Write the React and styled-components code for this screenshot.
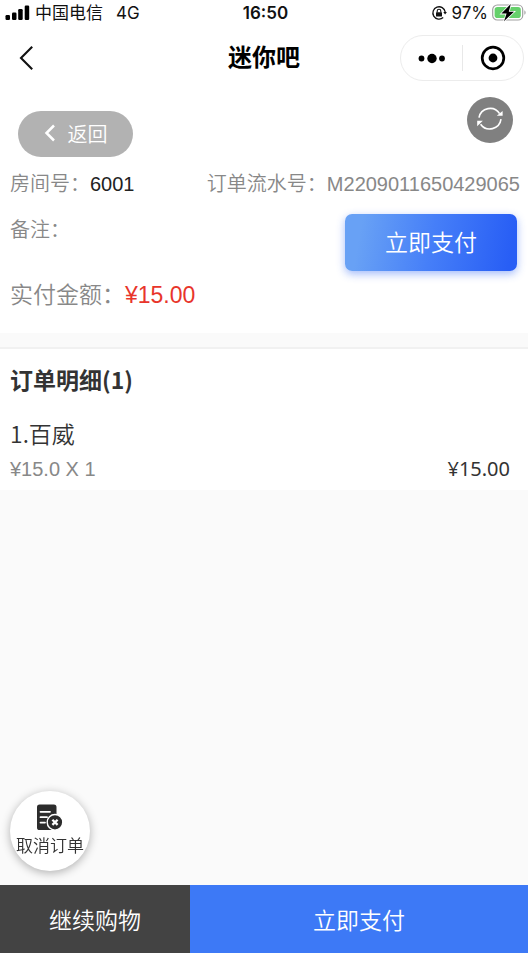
import styled, { createGlobalStyle } from 'styled-components';

const GlobalStyle = createGlobalStyle`
  * {
    box-sizing: border-box;
  }

  body {
    margin: 0;
    background: #fafafa;
    color: #333;
    font-family: 'Liberation Sans', 'Noto Sans CJK SC', sans-serif;
    font-size: 20px;
  }

  button {
    border: 0;
    padding: 0;
    font-family: inherit;
    cursor: pointer;
  }
`;

const Page = styled.div`
  display: flex;
  flex-direction: column;
  min-height: 100vh;
`;

const StatusBar = styled.div`
  display: grid;
  grid-template-columns: 1fr auto 1fr;
  align-items: center;
  height: 26px;
  padding: 0 2px 0 5px;
  background: #fff;
  color: #111;
  font-family: 'Inter', 'Noto Sans CJK SC', sans-serif;
  font-size: 17px;
  line-height: 26px;
`;

const StatusGroup = styled.div`
  display: flex;
  align-items: center;
  justify-content: ${props => (props.$end ? 'flex-end' : 'flex-start')};
  gap: ${props => (props.$end ? '4px' : '5px')};
`;

const Network = styled.span`
  margin-left: 8px;
`;

const Clock = styled.span`
  font-weight: 600;
`;

const NavBar = styled.header`
  display: grid;
  grid-template-columns: 1fr auto 1fr;
  align-items: center;
  height: 64px;
  padding: 0 4px;
  background: #fff;
  color: #000;
`;

const BackButton = styled.button`
  display: flex;
  justify-self: start;
  padding: 0 14px;
  background: none;
  color: #111;
`;

const NavTitle = styled.h1`
  margin: 0;
  font-size: 24px;
  font-weight: 700;
  line-height: 32px;
`;

const Capsule = styled.div`
  display: flex;
  align-items: center;
  justify-self: end;
  width: 124px;
  height: 46px;
  border: 1px solid #ececec;
  border-radius: 23px;
`;

const CapsuleButton = styled.button`
  display: flex;
  flex: 1;
  align-items: center;
  justify-content: center;
  height: 26px;
  background: none;

  & + & {
    border-left: 1px solid #e8e8e8;
  }
`;

const Toolbar = styled.div`
  display: flex;
  align-items: flex-end;
  justify-content: space-between;
  height: 78px;
  padding: 7px 15px 11px 18px;
  background: #fff;
`;

const ReturnButton = styled.button`
  display: flex;
  align-items: center;
  justify-content: center;
  gap: 12px;
  width: 115px;
  height: 46px;
  padding-bottom: 2px;
  border-radius: 23px;
  background: #b2b2b2;
  color: #fff;
  font-size: 20px;
  font-weight: 350;
`;

const RefreshButton = styled.button`
  display: flex;
  align-items: center;
  justify-content: center;
  align-self: flex-start;
  width: 46px;
  height: 46px;
  border-radius: 50%;
  background: #808080;
`;

const Summary = styled.section`
  padding: 0 10px 22px;
  background: #fff;
  color: #888;
  font-weight: 350;
  line-height: 32px;
`;

const SummaryRow = styled.div`
  display: flex;
  align-items: flex-start;
  justify-content: space-between;
  margin-right: ${props => props.$inset || '0'};
  margin-bottom: ${props => props.$gap || '0'};
`;

const Strong = styled.span`
  color: #222;
`;

const OrderNumber = styled.span`
  margin-right: -2px;
  white-space: nowrap;
`;

const PayButton = styled.button`
  width: 172px;
  height: 57px;
  padding-bottom: 4px;
  border-radius: 7px;
  background: linear-gradient(100deg, #68a1f5 10%, #467ff8 50%, #285ef5 95%);
  box-shadow: 0 3px 8px rgba(50, 104, 245, 0.45);
  color: #fff;
  font-size: 23px;
  font-weight: 350;
`;

const Amount = styled.div`
  font-size: 23px;
`;

const Price = styled.span`
  color: #e8352b;
`;

const Details = styled.section`
  margin-top: 14px;
  padding: 14px 18px 7px 10px;
  border-top: 2px solid #f1f1f1;
  background: #fff;
  font-family: 'Noto Sans CJK SC', sans-serif;
`;

const DetailsTitle = styled.h2`
  margin: 0 0 22px;
  font-size: 23px;
  font-weight: 700;
  line-height: 32px;
`;

const ItemName = styled.div`
  margin-bottom: 6px;
  font-size: 23px;
  font-weight: 350;
  line-height: 32px;
`;

const ItemRow = styled.div`
  display: flex;
  justify-content: space-between;
  line-height: 28px;
`;

const UnitPrice = styled.span`
  color: #888;
  font-family: 'Liberation Sans', sans-serif;
`;

const ItemTotal = styled.span`
  font-family: 'Noto Sans', sans-serif;
`;

const CancelButton = styled.button`
  position: fixed;
  bottom: 82px;
  left: 10px;
  display: flex;
  flex-direction: column;
  align-items: center;
  gap: 2px;
  width: 80px;
  height: 80px;
  padding-top: 13px;
  border-radius: 50%;
  background: #fff;
  box-shadow: 0 2px 10px rgba(0, 0, 0, 0.3);
  color: #333;
  font-size: 17px;
  font-weight: 350;
  line-height: 28px;
  white-space: nowrap;
`;

const Footer = styled.footer`
  position: sticky;
  bottom: 0;
  display: flex;
  height: 68px;
  margin-top: auto;
`;

const FooterButton = styled.button`
  flex: ${props => (props.$primary ? '64' : '36')} 1 0;
  background: ${props => (props.$primary ? '#3d79f6' : '#434343')};
  color: #fff;
  font-size: 23px;
  font-weight: 350;
`;

const SignalIcon = () => (
  <svg width="25" height="16" viewBox="0 0 25 16" fill="#000" aria-hidden="true">
    <rect x="0.5" y="10" width="4.5" height="5" rx="1.2" />
    <rect x="7" y="7.5" width="4.5" height="7.5" rx="1.2" />
    <rect x="13.2" y="4" width="4.5" height="11" rx="1.2" />
    <rect x="19.7" y="0.5" width="4.5" height="14.5" rx="1.2" />
  </svg>
);

const LockIcon = () => (
  <svg width="16" height="16" viewBox="0 0 16 16" fill="none" stroke="#111" aria-hidden="true">
    <path d="M12.2 12.6A6.2 6.2 0 1 1 14.2 7" strokeWidth="1.3" />
    <path d="M12.3 7h3.6l-1.8 2.6z" fill="#111" stroke="none" />
    <rect x="5" y="7.2" width="6" height="4.3" rx="0.6" fill="#111" stroke="none" />
    <path d="M6.2 7.5V6.1a1.8 1.8 0 0 1 3.6 0v1.4" strokeWidth="1.1" />
  </svg>
);

const BatteryIcon = () => (
  <svg width="34" height="20" viewBox="0 0 34 20" aria-hidden="true">
    <rect x="0.7" y="2" width="30" height="15" rx="4.6" fill="none" stroke="#a0a0a0" strokeWidth="1.2" />
    <rect x="2.6" y="3.9" width="26.2" height="11.2" rx="2.8" fill="#65d06b" />
    <path d="M32.4 7.2v4.6c1.6-.7 1.6-3.9 0-4.6z" fill="#a0a0a0" />
    <path d="M18.8 1 9.4 10.6h5.2L12 18.2l10-9.4h-5.2z" fill="#000" stroke="#fff" strokeWidth="1.6" paintOrder="stroke" />
  </svg>
);

const ChevronIcon = () => (
  <svg width="17" height="26" viewBox="0 0 17 26" fill="none" stroke="currentColor" strokeWidth="2.1" aria-hidden="true">
    <path d="M14.2 1.8 3 13l11.2 11.2" />
  </svg>
);

const SmallChevronIcon = () => (
  <svg width="12" height="18" viewBox="0 0 12 18" fill="none" stroke="#fff" strokeWidth="2.5" aria-hidden="true">
    <path d="M10 1.5 2.5 9l7.5 7.5" />
  </svg>
);

const DotsIcon = () => (
  <svg width="28" height="12" viewBox="0 0 28 12" aria-hidden="true">
    <circle cx="4.5" cy="6.5" r="2.9" />
    <circle cx="15" cy="6.5" r="4.7" />
    <circle cx="25" cy="6.5" r="2.9" />
  </svg>
);

const TargetIcon = () => (
  <svg width="26" height="26" viewBox="0 0 26 26" aria-hidden="true">
    <circle cx="13" cy="13" r="10.8" fill="none" stroke="#000" strokeWidth="2.7" />
    <circle cx="13" cy="13" r="4.4" />
  </svg>
);

const RefreshIcon = () => (
  <svg width="28" height="28" viewBox="0 0 28 28" fill="none" stroke="#fff" strokeWidth="1.6" aria-hidden="true">
    <path d="M3 11.6A11.3 11.3 0 0 1 23.6 7.6" />
    <path d="M25 13.2A11.3 11.3 0 0 1 4.6 18.2" />
    <path d="M20.8 9.8h5.8V5z" fill="#fff" stroke="none" />
    <path d="M1.2 20.2v-5.4h5.6z" fill="#fff" stroke="none" />
  </svg>
);

const CancelIcon = () => (
  <svg width="28" height="27" viewBox="0 0 28 27" fill="none" aria-hidden="true">
    <rect x="1" y="0.5" width="19.5" height="25.5" rx="2.6" fill="#2c2c2c" />
    <path d="M4.5 7.8h9.5M4.5 13.2h6.5M4.5 18.6h4.5" stroke="#fff" strokeWidth="1.8" strokeLinecap="round" />
    <circle cx="19" cy="18.3" r="7.8" fill="#2c2c2c" stroke="#fff" strokeWidth="1.4" />
    <path d="m16.4 15.7 5.2 5.2m0-5.2-5.2 5.2" stroke="#fff" strokeWidth="2.3" />
  </svg>
);

const App = () => {
  return (
    <Page>
      <GlobalStyle />
      <StatusBar>
        <StatusGroup>
          <SignalIcon />
          <span>中国电信</span>
          <Network>4G</Network>
        </StatusGroup>
        <Clock>16:50</Clock>
        <StatusGroup $end>
          <LockIcon />
          <span>97%</span>
          <BatteryIcon />
        </StatusGroup>
      </StatusBar>

      <NavBar>
        <BackButton aria-label="后退">
          <ChevronIcon />
        </BackButton>
        <NavTitle>迷你吧</NavTitle>
        <Capsule>
          <CapsuleButton aria-label="更多">
            <DotsIcon />
          </CapsuleButton>
          <CapsuleButton aria-label="关闭">
            <TargetIcon />
          </CapsuleButton>
        </Capsule>
      </NavBar>

      <main>
        <Toolbar>
          <ReturnButton>
            <SmallChevronIcon />
            返回
          </ReturnButton>
          <RefreshButton aria-label="刷新">
            <RefreshIcon />
          </RefreshButton>
        </Toolbar>

        <Summary>
          <SummaryRow $gap="14px">
            <span>
              房间号：<Strong>6001</Strong>
            </span>
            <OrderNumber>订单流水号：M2209011650429065</OrderNumber>
          </SummaryRow>
          <SummaryRow $gap="8px" $inset="1px">
            <span>备注：</span>
            <PayButton>立即支付</PayButton>
          </SummaryRow>
          <Amount>
            实付金额：<Price>¥15.00</Price>
          </Amount>
        </Summary>

        <Details>
          <DetailsTitle>订单明细(1)</DetailsTitle>
          <ItemName>1.百威</ItemName>
          <ItemRow>
            <UnitPrice>¥15.0 X 1</UnitPrice>
            <ItemTotal>¥15.00</ItemTotal>
          </ItemRow>
        </Details>
      </main>

      <CancelButton>
        <CancelIcon />
        取消订单
      </CancelButton>

      <Footer>
        <FooterButton>继续购物</FooterButton>
        <FooterButton $primary>立即支付</FooterButton>
      </Footer>
    </Page>
  );
};

export default App;
